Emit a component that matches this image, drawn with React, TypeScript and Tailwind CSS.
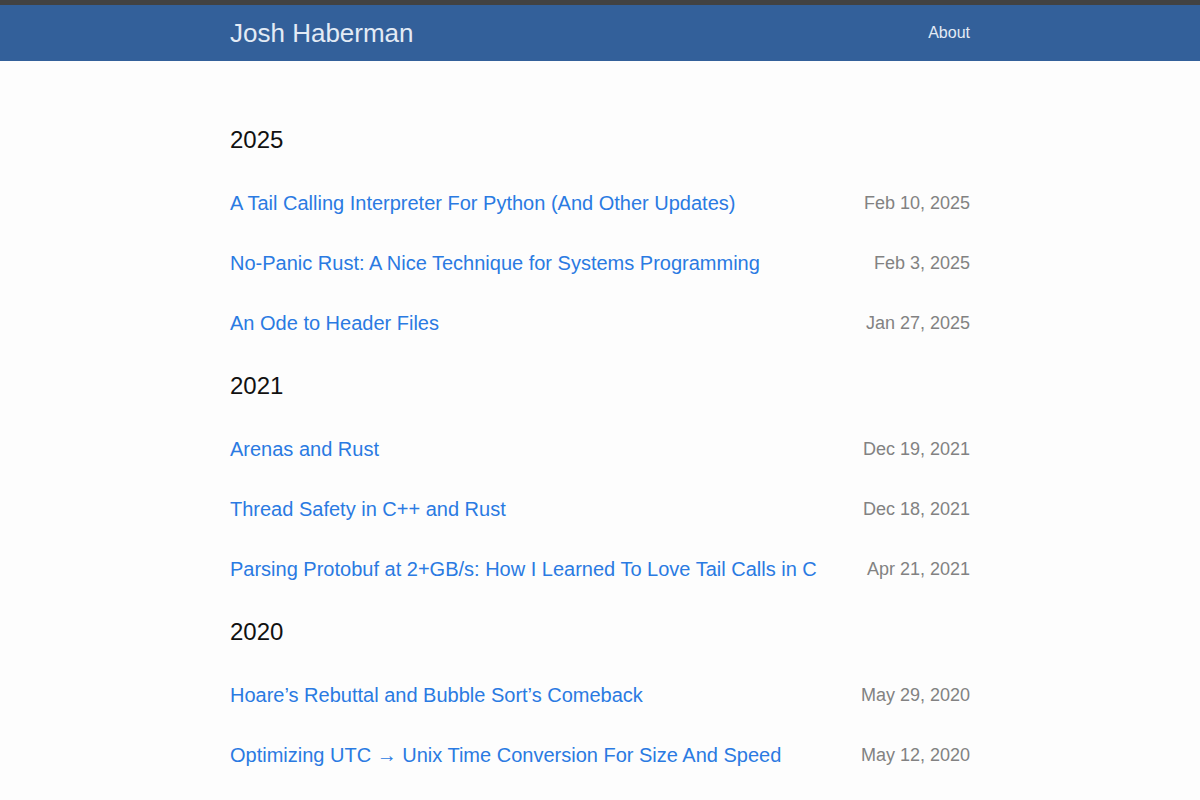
import React from 'react'

type Post = { title: string; date: string }
type YearGroup = { year: string; posts: Post[] }

const groups: YearGroup[] = [
  {
    year: '2025',
    posts: [
      { title: 'A Tail Calling Interpreter For Python (And Other Updates)', date: 'Feb 10, 2025' },
      { title: 'No-Panic Rust: A Nice Technique for Systems Programming', date: 'Feb 3, 2025' },
      { title: 'An Ode to Header Files', date: 'Jan 27, 2025' },
    ],
  },
  {
    year: '2021',
    posts: [
      { title: 'Arenas and Rust', date: 'Dec 19, 2021' },
      { title: 'Thread Safety in C++ and Rust', date: 'Dec 18, 2021' },
      { title: 'Parsing Protobuf at 2+GB/s: How I Learned To Love Tail Calls in C', date: 'Apr 21, 2021' },
    ],
  },
  {
    year: '2020',
    posts: [
      { title: 'Hoare\u2019s Rebuttal and Bubble Sort\u2019s Comeback', date: 'May 29, 2020' },
      { title: 'Optimizing UTC \u2192 Unix Time Conversion For Size And Speed', date: 'May 12, 2020' },
    ],
  },
]

export default function App() {
  return (
    <div className="min-h-screen bg-[#fdfdfd] font-['Liberation_Sans',Arial,sans-serif]">
      {/* Header */}
      <header className="border-t-[5px] border-[#424242] bg-[#33609a]">
        <div className="mx-auto flex h-[56px] w-[740px] items-center justify-between">
          <a className="text-[26px] leading-none text-[#e3ebf5]">Josh Haberman</a>
          <nav>
            <a className="text-[16px] text-[#e3ebf5]">About</a>
          </nav>
        </div>
      </header>

      {/* Posts */}
      <main className="mx-auto w-[740px] pt-[46px]">
        {groups.map((group) => (
          <section key={group.year}>
            <h2 className="my-[15px] text-[24px] leading-[36px] text-[#111]">{group.year}</h2>
            <ul>
              {group.posts.map((post) => (
                <li key={post.title} className="flex h-[60px] items-center justify-between">
                  <a className="text-[20px] text-[#2a7ae2]">{post.title}</a>
                  <span className="text-[18px] text-[#828282]">{post.date}</span>
                </li>
              ))}
            </ul>
          </section>
        ))}
      </main>
    </div>
  )
}
